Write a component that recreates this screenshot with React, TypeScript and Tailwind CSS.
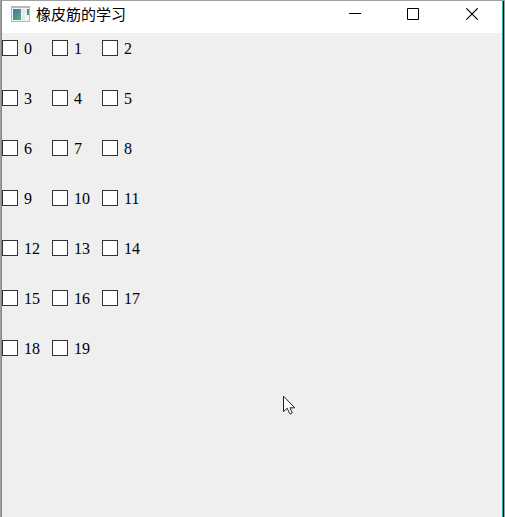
import React from "react";

const items = Array.from({ length: 20 }, (_, i) => i);

function AppIcon() {
  return (
    <svg width="19" height="16" viewBox="0 0 19 16" shapeRendering="crispEdges" aria-hidden="true">
      <defs>
        <linearGradient id="pane" x1="0" y1="0" x2="1" y2="1">
          <stop offset="0" stopColor="#4676a8" />
          <stop offset="1" stopColor="#5aae78" />
        </linearGradient>
      </defs>
      <rect x="0" y="0" width="19" height="16" fill="#b3b8bb" />
      <rect x="1" y="2" width="17" height="13" fill="#f1f4f5" />
      <rect x="2" y="3" width="8" height="11" fill="url(#pane)" />
      <rect x="11" y="3" width="3" height="5" fill="#e0e8ea" />
      <rect x="11" y="9" width="3" height="5" fill="#e0e8ea" />
      <rect x="15" y="3" width="3" height="7" fill="#dfe9ec" />
      <rect x="16" y="3" width="2" height="6" fill="url(#pane)" />
    </svg>
  );
}

function WindowButton({ label, children }: { label: string; children: React.ReactNode }) {
  return (
    <button type="button" aria-label={label} className="flex h-[27px] w-[59px] items-center justify-center">
      <svg width="13" height="13" viewBox="0 0 13 13" fill="none" stroke="#000000" aria-hidden="true">
        {children}
      </svg>
    </button>
  );
}

function TitleBar() {
  return (
    <header className="flex h-8 items-start justify-between bg-white">
      <div className="flex h-[26px] items-center gap-1.5 pl-[9px]">
        <AppIcon />
        <h1 className="whitespace-nowrap font-['Noto_Sans_CJK_SC',sans-serif] text-[15px] leading-5 text-black">
          橡皮筋的学习
        </h1>
      </div>
      <div className="flex">
        <WindowButton label="最小化">
          <path d="M1 5.5H13" />
        </WindowButton>
        <WindowButton label="最大化">
          <path d="M.5 .5H11.5V11.5H.5Z" />
        </WindowButton>
        <WindowButton label="关闭">
          <path d="M.3 .3L11.7 11.7M11.7 .3L.3 11.7" strokeWidth="1.2" />
        </WindowButton>
      </div>
    </header>
  );
}

export default function App() {
  return (
    <div className="flex min-h-screen border-x border-t border-x-[#a0a0a0] border-t-[#a0a0a0]">
      <div className="flex grow border-r border-black">
        <div className="relative flex grow flex-col border-x border-[#22aab6] bg-[#efefef]">
          <TitleBar />
          <main className="grid auto-rows-[50px] grid-cols-[repeat(3,50px)] pt-1">
            {items.map((n) => (
              <label
                key={n}
                className="flex items-center gap-1.5 self-start font-['Liberation_Serif',serif] text-[16px] leading-5 text-black"
              >
                <input
                  type="checkbox"
                  className="size-4 shrink-0 appearance-none border border-[#333333] bg-white checked:bg-[#333333]"
                />
                <span className="pt-0.5">{n}</span>
              </label>
            ))}
          </main>
          <svg
            className="pointer-events-none absolute left-[281px] top-[394px]"
            width="13"
            height="20"
            viewBox="0 0 13 20"
            aria-hidden="true"
          >
            <path
              d="M.5 1.2V16.5L4.2 13.2L6.6 18.6Q8 19.6 9.2 17.8L7 12.8H11.8Z"
              fill="#ffffff"
              stroke="#20202c"
              strokeWidth="1"
            />
          </svg>
        </div>
      </div>
    </div>
  );
}
